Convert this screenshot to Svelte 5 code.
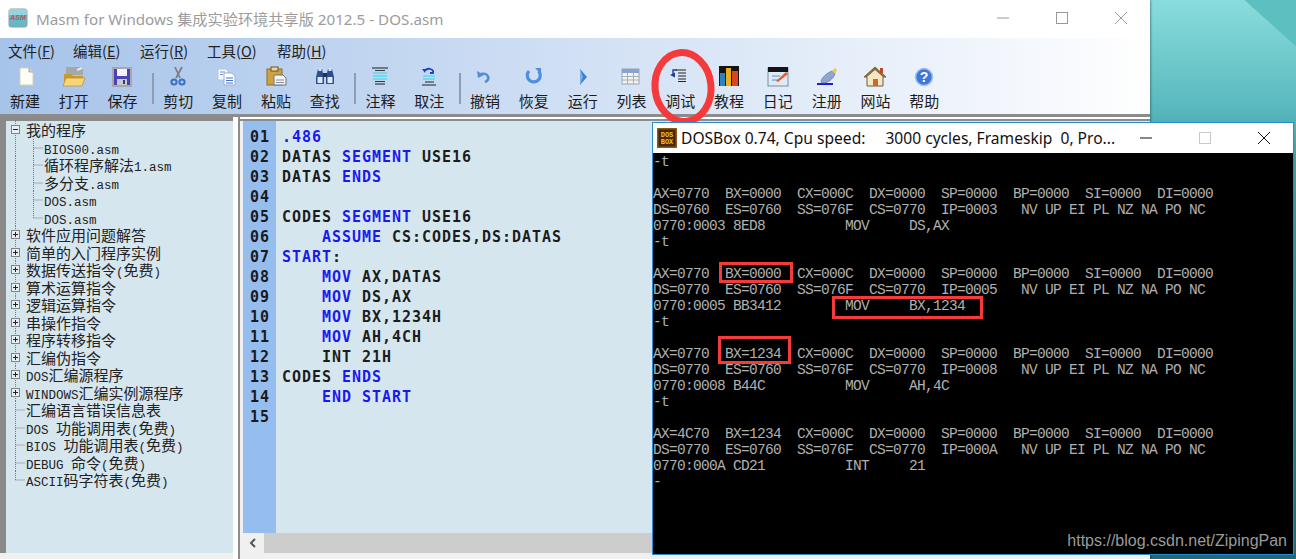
<script>
	// Masm for Windows main window with a DOSBox window over it, on a teal desktop.
	const menus = [
		{ label: '文件(', key: 'F', width: 65 },
		{ label: '编辑(', key: 'E', width: 67 },
		{ label: '运行(', key: 'R', width: 67 },
		{ label: '工具(', key: 'O', width: 70 },
		{ label: '帮助(', key: 'H', width: 60 }
	];

	const icons = {
		new: '<path d="M7 2h9l4 4v13H7z" fill="#fffef6" stroke="#d6d2b4"/><path d="M16 2v4h4" fill="#cfd3dc" stroke="#a9a68c"/>',
		open: '<path d="M4 1h14l3 2v6H4z" fill="#a3a8a8"/><path d="M15 4l5-2" stroke="#e8e8e8" stroke-width="2"/><path d="M2 8h7l2 2h10v9H2z" fill="#c89a32"/><path d="M4 12h19l-3 8H1z" fill="#f7d678" stroke="#bb8c2c" stroke-width=".7"/>',
		save: '<rect x="2" y="1" width="20" height="20" fill="#a7a7ae"/><rect x="4" y="3" width="16" height="16" fill="#4a42b6"/><rect x="7" y="3" width="10" height="7" fill="#f2f2fa"/><rect x="7" y="13" width="10" height="6" fill="#c9c9d0"/><rect x="13" y="14" width="2" height="4" fill="#3a3a70"/>',
		cut: '<path d="M9 1l5 11M16 1l-6 11" stroke="#7b7f86" stroke-width="1.800"/><circle cx="8" cy="16" r="2.600" fill="none" stroke="#3b6fc6" stroke-width="2"/><circle cx="16" cy="16" r="2.600" fill="none" stroke="#3b6fc6" stroke-width="2"/>',
		copy: '<path d="M3 3h8l2 2v9H3z" fill="#f5f8fd" stroke="#b6c6de"/><path d="M9 7h8l3 3v9H9z" fill="#fff" stroke="#9ab0d2"/><path d="M11 12h7M11 14.500h7M11 17h7" stroke="#3d74c4"/><path d="M5 6h5M5 8.500h3" stroke="#6f97d4"/>',
		paste: '<rect x="3" y="3" width="15" height="16" fill="#d0a23e" stroke="#8d6e2c"/><rect x="7" y="1" width="7" height="4" fill="#e9d9a0" stroke="#6b5524"/><path d="M10 9h9l3 3v7H10z" fill="#f4f4f4" stroke="#70757c"/><path d="M12 14h8M12 16.500h8" stroke="#8a8f96"/>',
		find: '<path d="M5 3h4l2 8v7H3v-7z" fill="#2d4f8f"/><path d="M15 3h4l2 8v7h-8v-7z" fill="#2d4f8f"/><rect x="10" y="7" width="4" height="4" fill="#26324f"/><rect x="4.500" y="11" width="5" height="6" fill="#dfe8f6"/><rect x="14.500" y="11" width="5" height="6" fill="#dfe8f6"/><rect x="5.500" y="2" width="3" height="3" fill="#d9e3f2"/><rect x="15.500" y="2" width="3" height="3" fill="#d9e3f2"/>',
		comment: '<path d="M4 2h16M7 18h10" stroke="#1d1d1d" stroke-width="1.200"/><path d="M5 7h14M5 10h14M5 13h14" stroke="#22dcec" stroke-width="1.200"/><path d="M7 4.500h10M7 15.500h10" stroke="#333"/>',
		uncomment: '<path d="M8 5a4 3 0 1 1 8 2h-3" fill="none" stroke="#1f3fc0" stroke-width="1.800"/><path d="M5 3l4 0-1 4z" fill="#1f3fc0"/><path d="M6 10h12M6 13h12" stroke="#22dcec" stroke-width="1.200"/><path d="M8 16h9M5 19h14" stroke="#222" stroke-width="1.200"/>',
		undo: '<path d="M8 8a5 4 0 1 1 4 8" fill="none" stroke="#4f8fdc" stroke-width="2.600"/><path d="M4 5l1 7 6-3z" fill="#4f8fdc"/>',
		redo: '<path d="M7 5a6.500 6.500 0 1 0 9.500 0" fill="none" stroke="#4f8fdc" stroke-width="3.200"/><path d="M13 2h6v6z" fill="#4f8fdc"/>',
		run: '<path d="M9 3l7 8-7 8z" fill="#3a80d8"/><path d="M9 3l3 8-3 8z" fill="#7cb0ec"/>',
		list: '<rect x="3" y="3" width="17" height="15" fill="#f5f3e8" stroke="#9aa4b4"/><rect x="3" y="3" width="17" height="4" fill="#8aa2d0"/><path d="M3 10.500h17M3 14h17M8.500 7v11M14.500 7v11" stroke="#a3aec0"/>',
		debug: '<path d="M9 4H5v4" fill="none" stroke="#1f3f8f" stroke-width="1.400"/><path d="M2 9l5-2.500v5z" fill="#1f3f8f"/><path d="M8 4h10M10 7h8M10 10h8M10 13h8M10 15.500h8" stroke="#222"/>',
		course: '<rect x="2" y="0" width="20" height="20" fill="#141414"/><rect x="3" y="7" width="5" height="13" fill="#2d82c0"/><rect x="9" y="2" width="5" height="18" fill="#e8b020"/><rect x="15" y="5" width="6" height="15" fill="#d8481c"/>',
		diary: '<rect x="2" y="2" width="20" height="18" fill="#dfeaf6" stroke="#7b8da8"/><rect x="2" y="1" width="20" height="5" fill="#141414"/><path d="M6 10h8M6 14h6" stroke="#4f8fd0"/><path d="M10 15l10-9 2 2-10 8z" fill="#e85a32"/>',
		register: '<path d="M2 18h16" stroke="#1a1ae0" stroke-width="2"/><path d="M6 16c0-4 6-9 11-11l3 3c-2 5-7 9-12 9z" fill="#8fa6d0" stroke="#5a6f9e" stroke-width=".7"/><path d="M17 5l3-3 2 2-2 4z" fill="#e8c850"/>',
		site: '<path d="M12 1L1 11h3v9h16v-9h3z" fill="#f4e8c4" stroke="#6f5a3a"/><path d="M12 1L1 11h3l8-7 8 7h3z" fill="#8a6a3c"/><rect x="10" y="13" width="5" height="7" fill="#c86a28"/><rect x="17" y="2" width="3" height="5" fill="#b84a2a"/>',
		help: '<circle cx="12" cy="11" r="8.500" fill="#3f78d8" stroke="#a6c2ee" stroke-width="1.600"/>'
	};

	const tools = [
		['新建', 'new'], ['打开', 'open'], ['保存', 'save'], null,
		['剪切', 'cut'], ['复制', 'copy'], ['粘贴', 'paste'], ['查找', 'find'], null,
		['注释', 'comment'], ['取注', 'uncomment'], null,
		['撤销', 'undo'], ['恢复', 'redo'], ['运行', 'run'], ['列表', 'list'], ['调试', 'debug'],
		['教程', 'course'], ['日记', 'diary'], ['注册', 'register'], ['网站', 'site'], ['帮助', 'help']
	];

	// kind: open = minus box, closed = plus box, leaf = no box, child = nested leaf
	const tree = [
		['open', '我的程序'],
		['child', 'BIOS00.asm'],
		['child', '循环程序解法1.asm'],
		['child', '多分支.asm'],
		['child', 'DOS.asm'],
		['lastchild', 'DOS.asm'],
		['closed', '软件应用问题解答'],
		['closed', '简单的入门程序实例'],
		['closed', '数据传送指令(免费)'],
		['closed', '算术运算指令'],
		['closed', '逻辑运算指令'],
		['closed', '串操作指令'],
		['closed', '程序转移指令'],
		['closed', '汇编伪指令'],
		['closed', 'DOS汇编源程序'],
		['closed', 'WINDOWS汇编实例源程序'],
		['leaf', '汇编语言错误信息表'],
		['leaf', 'DOS 功能调用表(免费)'],
		['leaf', 'BIOS 功能调用表(免费)'],
		['leaf', 'DEBUG 命令(免费)'],
		['last', 'ASCII码字符表(免费)']
	];

	// latin runs are set in a narrower mono face than the CJK text
	const splitRuns = (text) => text.split(/([\x00-\x7f]+)/).filter(Boolean);
	const isLatin = (run) => /^[\x00-\x7f]/.test(run);

	const code = [
		[['k', '.486']],
		[['t', 'DATAS '], ['k', 'SEGMENT'], ['t', ' USE16']],
		[['t', 'DATAS '], ['k', 'ENDS']],
		[],
		[['t', 'CODES '], ['k', 'SEGMENT'], ['t', ' USE16']],
		[['t', '    '], ['k', 'ASSUME'], ['t', ' CS:CODES,DS:DATAS']],
		[['k', 'START'], ['t', ':']],
		[['t', '    '], ['k', 'MOV'], ['t', ' AX,DATAS']],
		[['t', '    '], ['k', 'MOV'], ['t', ' DS,AX']],
		[['t', '    '], ['k', 'MOV'], ['t', ' BX,1234H']],
		[['t', '    '], ['k', 'MOV'], ['t', ' AH,4CH']],
		[['t', '    INT 21H']],
		[['t', 'CODES '], ['k', 'ENDS']],
		[['t', '    '], ['k', 'END'], ['t', ' '], ['k', 'START']],
		[]
	];

	const lineNo = (i) => String(i + 1).padStart(2, '0');

	const dump = `-t

AX=0770  BX=0000  CX=000C  DX=0000  SP=0000  BP=0000  SI=0000  DI=0000
DS=0760  ES=0760  SS=076F  CS=0770  IP=0003   NV UP EI PL NZ NA PO NC
0770:0003 8ED8          MOV     DS,AX
-t

AX=0770  BX=0000  CX=000C  DX=0000  SP=0000  BP=0000  SI=0000  DI=0000
DS=0770  ES=0760  SS=076F  CS=0770  IP=0005   NV UP EI PL NZ NA PO NC
0770:0005 BB3412        MOV     BX,1234
-t

AX=0770  BX=1234  CX=000C  DX=0000  SP=0000  BP=0000  SI=0000  DI=0000
DS=0770  ES=0760  SS=076F  CS=0770  IP=0008   NV UP EI PL NZ NA PO NC
0770:0008 B44C          MOV     AH,4C
-t

AX=4C70  BX=1234  CX=000C  DX=0000  SP=0000  BP=0000  SI=0000  DI=0000
DS=0770  ES=0760  SS=076F  CS=0770  IP=000A   NV UP EI PL NZ NA PO NC
0770:000A CD21          INT     21
-`;
</script>

<div class="desktop">
	<section class="masm">
		<header class="titlebar">
			<svg class="app-icon" width="20" height="20" viewBox="0 0 20 20">
				<rect x="1" y="1" width="18" height="18" rx="2" fill="#5fbcc8" stroke="#9a9a9a" />
				<rect x="1" y="1" width="18" height="6" fill="#a8e0e6" opacity=".7" />
				<text x="10" y="12" text-anchor="middle" class="asm">ASM</text>
			</svg>
			<span class="title">Masm for Windows 集成实验环境共享版 2012.5 - DOS.asm</span>
			<div class="controls">
				<svg width="14" height="14" viewBox="0 0 14 14"><path d="M1 7h12" stroke="#9a9a9a" /></svg>
				<svg width="14" height="14" viewBox="0 0 14 14"><rect x="1.500" y="1.500" width="11" height="11" fill="none" stroke="#9a9a9a" /></svg>
				<svg width="14" height="14" viewBox="0 0 14 14"><path d="M1 1l12 12M13 1L1 13" stroke="#9a9a9a" /></svg>
			</div>
		</header>

		<div class="chrome">
			<nav class="menu">
				{#each menus as m}
					<span class="menu-item" style="width:{m.width}px">{m.label}<u>{m.key}</u>)</span>
				{/each}
			</nav>
			<div class="toolbar">
				{#each tools as t}
					{#if t}
						<button class="tool">
							<svg width="24" height="22" viewBox="0 0 24 22">
								{@html icons[t[1]]}
								{#if t[1] === 'help'}<text x="12" y="15.500" text-anchor="middle" class="qmark">?</text>{/if}
							</svg>
							<span>{t[0]}</span>
						</button>
					{:else}
						<span class="sep"></span>
					{/if}
				{/each}
			</div>
		</div>

		<div class="panes">
			<aside class="tree">
				{#each tree as [kind, text]}
					<div class="row" class:nested={kind === 'child' || kind === 'lastchild'}>
						<svg class="guide" width="44" height="18" viewBox="0 0 44 18">
							{#if kind !== 'last'}
								<path d="M15.500 0v18" class="dots" />
							{:else}
								<path d="M15.500 0v9" class="dots" />
							{/if}
							{#if kind === 'open' || kind === 'closed'}
								<rect x="11.500" y="4.500" width="8" height="8" fill="#e8eef2" stroke="#7c8488" />
								<path d="M13 8.500h5" stroke="#222" />
								{#if kind === 'closed'}<path d="M15.500 6v5" stroke="#222" />{/if}
							{:else if kind === 'leaf' || kind === 'last'}
								<path d="M15.500 9h9" class="dots" />
							{:else}
								<path d={kind === 'child' ? 'M33.500 0v18' : 'M33.500 0v9'} class="dots" />
								<path d="M33.500 9h9" class="dots" />
							{/if}
						</svg>
						<span class="label">
							{#each splitRuns(text) as run}
								{#if isLatin(run)}<span class="latin">{run}</span>{:else}{run}{/if}
							{/each}
						</span>
					</div>
				{/each}
			</aside>

			<div class="splitter"></div>

			<main class="editor">
				<div class="code">
					<div class="gutter">
						{#each code as _, i}
							<div class="num">{lineNo(i)}</div>
						{/each}
					</div>
					<div class="lines">
						{#each code as line}
							<div class="line">{#each line as [c, s]}<span class={c}>{s}</span>{/each}</div>
						{/each}
					</div>
				</div>
				<div class="hscroll">
					<svg width="21" height="20" viewBox="0 0 21 20"><path d="M12 6l-4 4 4 4" fill="none" stroke="#555" stroke-width="2" /></svg>
					<div class="thumb"></div>
				</div>
			</main>
		</div>

		<svg class="circle" width="90" height="90" viewBox="0 0 90 90">
			<ellipse cx="45" cy="45" rx="28" ry="34.500" fill="none" stroke="#f53a3c" stroke-width="7" transform="rotate(-6 45 45)" />
		</svg>
	</section>

	<section class="dosbox">
		<header class="dos-title">
			<svg width="20" height="20" viewBox="0 0 20 20">
				<rect width="20" height="20" fill="#8a5a18" />
				<rect x="1.500" y="1.500" width="17" height="17" fill="#4a2608" />
				<text x="10" y="8.500" text-anchor="middle" class="dos-mark">DOS</text>
				<text x="10" y="16" text-anchor="middle" class="dos-mark">BOX</text>
			</svg>
			<span class="dos-text">DOSBox 0.74, Cpu speed:</span>
			<span class="dos-text rest">3000 cycles, Frameskip&nbsp; 0, Pro...</span>
			<div class="dos-controls">
				<svg width="14" height="14" viewBox="0 0 14 14"><path d="M1 7h12" stroke="#111" /></svg>
				<svg width="14" height="14" viewBox="0 0 14 14"><rect x="1.500" y="1.500" width="11" height="11" fill="none" stroke="#c8c8c8" /></svg>
				<svg width="14" height="14" viewBox="0 0 14 14"><path d="M1 1l12 12M13 1L1 13" stroke="#111" /></svg>
			</div>
		</header>
		<pre class="console">{dump}</pre>
		<span class="mark box-a"></span>
		<span class="mark box-b"></span>
		<span class="mark box-c"></span>
		<span class="watermark">https://blog.csdn.net/ZipingPan</span>
	</section>
</div>

<style>
	:global(body) {
		overflow: hidden;
	}
	.desktop {
		position: relative;
		width: 1296px;
		height: 559px;
		overflow: hidden;
		background:
			linear-gradient(222deg, #5cc0c0 0 34px, transparent 35px),
			linear-gradient(180deg, #8adcdc 0, #5cbcc0 100px, #3f9ea6 160px, #1f6a76 559px);
		font-family: "Noto Sans CJK SC", "Noto Sans", sans-serif;
	}

	.masm {
		position: absolute;
		left: 0;
		top: 0;
		width: 1150px;
		height: 559px;
		display: flex;
		flex-direction: column;
		background: #f0f0f0;
		box-shadow: 1px 0 2px rgba(0, 0, 0, 0.35);
	}
	.titlebar {
		height: 38px;
		flex: none;
		box-sizing: border-box;
		padding: 0 0 2px 8px;
		display: flex;
		align-items: center;
		background: #fff;
	}
	.app-icon {
		margin-right: 8px;
	}
	.asm {
		font: italic bold 7px "Liberation Sans", sans-serif;
		fill: #c8505a;
	}
	.title {
		font-size: 15.200px;
		color: #9c9c9c;
		font-family: "Noto Sans", "Noto Sans CJK SC", sans-serif;
	}
	.controls {
		margin-left: auto;
		display: flex;
		gap: 45px;
		padding-right: 22px;
	}

	.chrome {
		height: 76px;
		flex: none;
		background: linear-gradient(90deg, #a6c3ea 0, #c8daf2 40%, #e4edf9 72%, #fbfcfe 96%, #fff 100%);
	}
	.menu {
		height: 24px;
		display: flex;
		align-items: center;
		padding-left: 8px;
	}
	.menu-item {
		font-size: 14.500px;
		line-height: 23px;
		color: #222;
		white-space: nowrap;
	}
	.toolbar {
		height: 52px;
		display: flex;
		align-items: flex-start;
		padding-left: 0.500px;
	}
	.tool {
		width: 48.800px;
		flex: none;
		padding: 4px 0 0;
		border: 0;
		background: none;
		display: flex;
		flex-direction: column;
		align-items: center;
		font-family: inherit;
	}
	.tool span {
		font-size: 15px;
		line-height: 22px;
		height: 22px;
		margin-top: 2px;
		color: #1c1c1c;
		white-space: nowrap;
	}
	.qmark {
		font: bold 14px "Liberation Sans", sans-serif;
		fill: #fff;
	}
	.sep {
		width: 7px;
		flex: none;
		height: 31px;
		margin-top: 11px;
		padding-left: 5px;
		box-sizing: border-box;
	}
	.sep::before {
		content: "";
		display: block;
		width: 2px;
		height: 100%;
		background: #8d9db2;
	}

	.panes {
		flex: 1;
		min-height: 0;
		display: flex;
		background: #f0f0f0;
		border-top: 3px solid #8c8c8c;
	}
	.tree {
		width: 233px;
		flex: none;
		box-sizing: border-box;
		margin-bottom: 6px;
		background: #d6e6ef;
		border-left: 6px solid #8a8a8a;
		border-top: 4px solid #8a8a8a;
		position: relative;
		overflow: hidden;
	}
	.row {
		height: 17.500px;
		position: relative;
		padding-left: 20px;
		white-space: nowrap;
	}
	.row.nested {
		padding-left: 38px;
	}
	.guide {
		position: absolute;
		left: -6px;
		top: 0;
	}
	.dots {
		stroke: #777;
		stroke-dasharray: 1 1;
		fill: none;
	}
	.label {
		display: block;
		height: 17.500px;
		font-size: 15px;
		line-height: 17.500px;
		color: #222;
		white-space: pre;
	}
	.latin {
		font-family: "Liberation Mono", monospace;
		font-size: 12.500px;
		line-height: 1;
	}

	.splitter {
		width: 7px;
		flex: none;
		background: linear-gradient(90deg, #fff 0 5px, #8c8c8c 5px);
	}

	.editor {
		flex: 1;
		min-width: 0;
		display: flex;
		flex-direction: column;
		margin-bottom: 6px;
		padding-left: 3px;
		border-top: 2px solid #fff;
		box-shadow: inset 0 2px 0 #8c8c8c;
		padding-top: 2px;
		background: #f0f0f0;
	}
	.code {
		flex: 1;
		min-height: 0;
		display: flex;
		background: #d6e6ef;
		font: bold 15px/20px "DejaVu Sans Mono", monospace;
		letter-spacing: 0.970px;
	}
	.gutter {
		width: 33px;
		flex: none;
		box-sizing: border-box;
		padding: 6px 0 0 7px;
		background: #95bdee;
		color: #1a1a1a;
	}
	.lines {
		padding: 6px 0 0 6px;
	}
	.line {
		height: 20px;
		white-space: pre;
	}
	.num {
		height: 20px;
	}
	.k {
		color: #1a1af0;
	}
	.t {
		color: #1c1c1c;
	}
	.hscroll {
		height: 20px;
		flex: none;
		display: flex;
		background: #f0f0f0;
	}
	.thumb {
		flex: 1;
		background: #cdcdcd;
	}

	.circle {
		position: absolute;
		left: 638px;
		top: 42px;
	}

	.dosbox {
		position: absolute;
		left: 652px;
		top: 122px;
		width: 642px;
		height: 433px;
		box-sizing: border-box;
		border: 1px solid #2a8ad6;
		display: flex;
		flex-direction: column;
		background: #000;
	}
	.dos-title {
		height: 30px;
		flex: none;
		display: flex;
		align-items: center;
		padding-left: 4px;
		background: #fff;
	}
	.dos-text {
		font: 15.600px "Noto Sans", sans-serif;
		color: #111;
		margin-left: 4px;
		white-space: pre;
	}
	.dos-text.rest {
		margin-left: 20px;
	}
	.dos-mark {
		font: bold 7px "Liberation Mono", monospace;
		fill: #f0c030;
	}
	.dos-controls {
		margin-left: auto;
		display: flex;
		gap: 45px;
		padding-right: 22px;
	}
	.console {
		margin: 0;
		flex: 1;
		padding-top: 1px;
		font: 14.500px/16px "Liberation Mono", monospace;
		letter-spacing: -0.700px;
		color: #b0b0b0;
		background: #000;
		overflow: hidden;
	}
	.mark {
		position: absolute;
		box-sizing: border-box;
		border: 3px solid #f53a3c;
	}
	.box-a {
		left: 66px;
		top: 139px;
		width: 74px;
		height: 21px;
	}
	.box-b {
		left: 179px;
		top: 173px;
		width: 151px;
		height: 23px;
	}
	.box-c {
		left: 65px;
		top: 213px;
		width: 73px;
		height: 28px;
	}
	.watermark {
		position: absolute;
		right: 6px;
		bottom: 4px;
		font: 16px "Liberation Sans", sans-serif;
		color: #9a9a9a;
	}
</style>
